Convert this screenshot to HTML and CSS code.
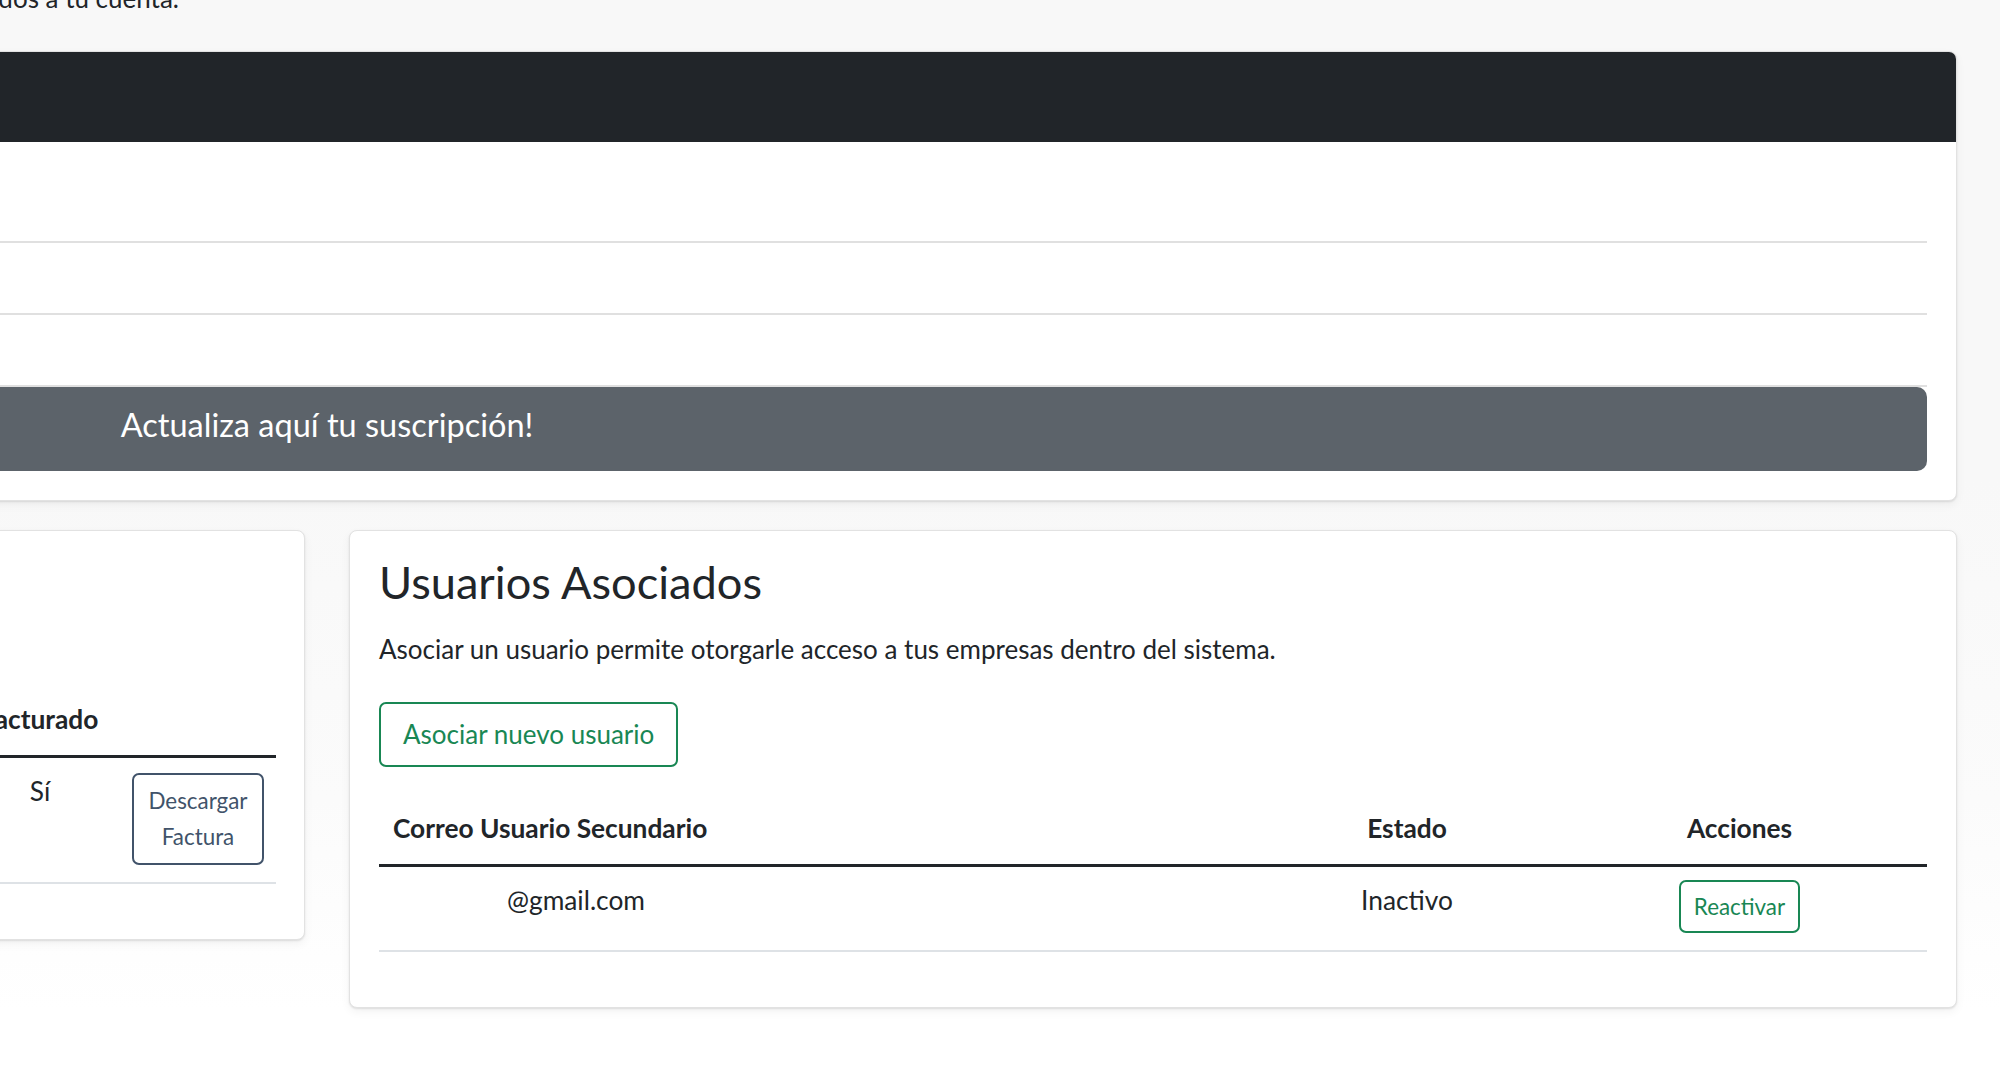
FILE: index.html
```html
<!DOCTYPE html>
<html lang="es">
<head>
  <meta charset="UTF-8" />
  <meta name="viewport" content="width=device-width, initial-scale=1.0" />
  <title>Mi cuenta - Suscripción</title>
  <link rel="stylesheet" href="styles.css">
</head>
<body>
  <div class="page">
    <p class="intro">Aquí podrás consultar el detalle de tu plan, revisar el historial de facturación y gestionar los usuarios asociados a tu cuenta.</p>

    <div class="card plan-card">
      <div class="card-header">Detalle de suscripción</div>
      <div class="card-body">
        <div class="plan-row"><span>Plan actual</span><strong>Básico</strong></div>
        <div class="plan-row"><span>Vigencia</span><strong>Mensual</strong></div>
        <div class="plan-row"><span>Empresas</span><strong>1</strong></div>
        <a href="#" class="upgrade-btn">Actualiza aquí tu suscripción!</a>
      </div>
    </div>

    <div class="cards-row">
      <div class="card">
        <div class="card-body">
          <h2 class="card-title">Facturas</h2>
          <p class="card-text">Descarga las facturas de tus pagos.</p>
          <table class="table invoices">
            <colgroup>
              <col class="col-date">
              <col class="col-plan">
              <col class="col-amount">
              <col class="col-billed">
              <col class="col-download">
            </colgroup>
            <thead>
              <tr>
                <th>Fecha</th>
                <th>Plan</th>
                <th>Monto</th>
                <th>Facturado</th>
                <th></th>
              </tr>
            </thead>
            <tbody>
              <tr>
                <td>12/03/2024</td>
                <td>Básico</td>
                <td>$9.990</td>
                <td>Sí</td>
                <td><a href="#" class="btn btn-slate">Descargar Factura</a></td>
              </tr>
            </tbody>
          </table>
        </div>
      </div>

      <div class="card">
        <div class="card-body">
          <h2 class="card-title">Usuarios Asociados</h2>
          <p class="card-text">Asociar un usuario permite otorgarle acceso a tus empresas dentro del sistema.</p>
          <a href="#" class="btn btn-green btn-lg">Asociar nuevo usuario</a>
          <table class="table users">
            <colgroup>
              <col class="col-email">
              <col class="col-status">
              <col class="col-actions">
            </colgroup>
            <thead>
              <tr>
                <th class="th-email">Correo Usuario Secundario</th>
                <th>Estado</th>
                <th>Acciones</th>
              </tr>
            </thead>
            <tbody>
              <tr>
                <td class="email">@gmail.com</td>
                <td>Inactivo</td>
                <td><a href="#" class="btn btn-green btn-sm">Reactivar</a></td>
              </tr>
            </tbody>
          </table>
        </div>
      </div>
    </div>
  </div>
</body>
</html>
```

FILE: styles.css
```css
:root {
  --dark: #212529;
  --secondary: #5c636a;
  --success: #198754;
  --slate: #41536a;
  --border: #dee2e6;
  --radius: 8px;
}

body {
  margin: 0;
  overflow: hidden;
  font-family: Lato, 'Liberation Sans', sans-serif;
  font-size: 26px;
  line-height: 36px;
  color: var(--dark);
  background: linear-gradient(#f8f8f8 0, #f8f8f8 480px, #fbfbfb 800px, #ffffff 1010px);
  min-height: 1086px;
}

/* page is scrolled to the right, so the left part sits off screen */
.page {
  width: 3260px;
  margin: -20px 0 0 -1303px;
}

.intro {
  margin: 0 0 35px 94px;
}

.card {
  background: #fff;
  border: 1px solid #e2e2e2;
  border-radius: var(--radius);
  box-shadow: 0 1px 2px rgba(0,0,0,0.10), 0 4px 10px rgba(0,0,0,0.05);
}

.card-body {
  padding: 29px;
}

.plan-card .card-header {
  height: 90px;
  line-height: 90px;
  padding: 0 29px;
  background: var(--dark);
  color: #fff;
  border-radius: 7px 7px 0 0;
}

.plan-row {
  height: 70px;
  display: flex;
  align-items: center;
  gap: 24px;
  border-bottom: 2px solid #e0e0e0;
}

.upgrade-btn {
  display: block;
  box-sizing: border-box;
  height: 84px;
  line-height: 76px;
  padding-bottom: 8px;
  text-align: center;
  background: var(--secondary);
  color: #fff;
  font-size: 32.5px;
  text-decoration: none;
  border-radius: 10px;
}

.cards-row {
  display: grid;
  grid-template-columns: minmax(0, 1fr) minmax(0, 1fr);
  gap: 44px;
  align-items: start;
  margin-top: 29px;
}

.card-title {
  margin: -3px 0 24px;
  font-size: 45.2px;
  line-height: 1.1;
  font-weight: 400;
}

.card-text {
  margin: 0 0 22px;
}

.btn {
  display: inline-block;
  box-sizing: border-box;
  text-align: center;
  text-decoration: none;
  background: #fff;
  border: 2px solid;
  border-radius: 7px;
}

.btn-green {
  color: var(--success);
  border-color: var(--success);
}

.btn-lg {
  display: block;
  width: fit-content;
  height: 65px;
  line-height: 61px;
  margin-top: 35px;
  padding: 0 22px;
  font-size: 26px;
}

.btn-sm {
  height: 53px;
  line-height: 49px;
  padding: 0 13px;
  margin-top: 1px;
  font-size: 22.4px;
}

.btn-slate {
  color: var(--slate);
  border-color: var(--slate);
  padding: 8px 12px;
  margin-top: 3px;
  font-size: 22.4px;
  line-height: 36px;
}

.table {
  width: 100%;
  border-collapse: collapse;
  table-layout: fixed;
  font-size: 26.3px;
  line-height: 42px;
  margin-bottom: 26px;
}

.btn-lg + .table {
  margin-top: 31px;
}

.table th {
  padding: 9px 12px 15px;
  font-weight: 700;
  text-align: center;
  border-bottom: 3px solid var(--dark);
}

.table td {
  padding: 12px 12px 17px;
  text-align: center;
  vertical-align: top;
  border-bottom: 2px solid var(--border);
}

.col-date,
.col-plan,
.col-amount { width: 411px; }
.col-billed { width: 160px; }
.col-download { width: 156px; }

.col-email { width: 883px; }
.col-status { width: 290px; }
.col-actions { width: 375px; }

.users .th-email {
  text-align: left;
  padding-left: 14px;
}

.users td.email {
  text-align: left;
  padding-left: 128px;
}
```
